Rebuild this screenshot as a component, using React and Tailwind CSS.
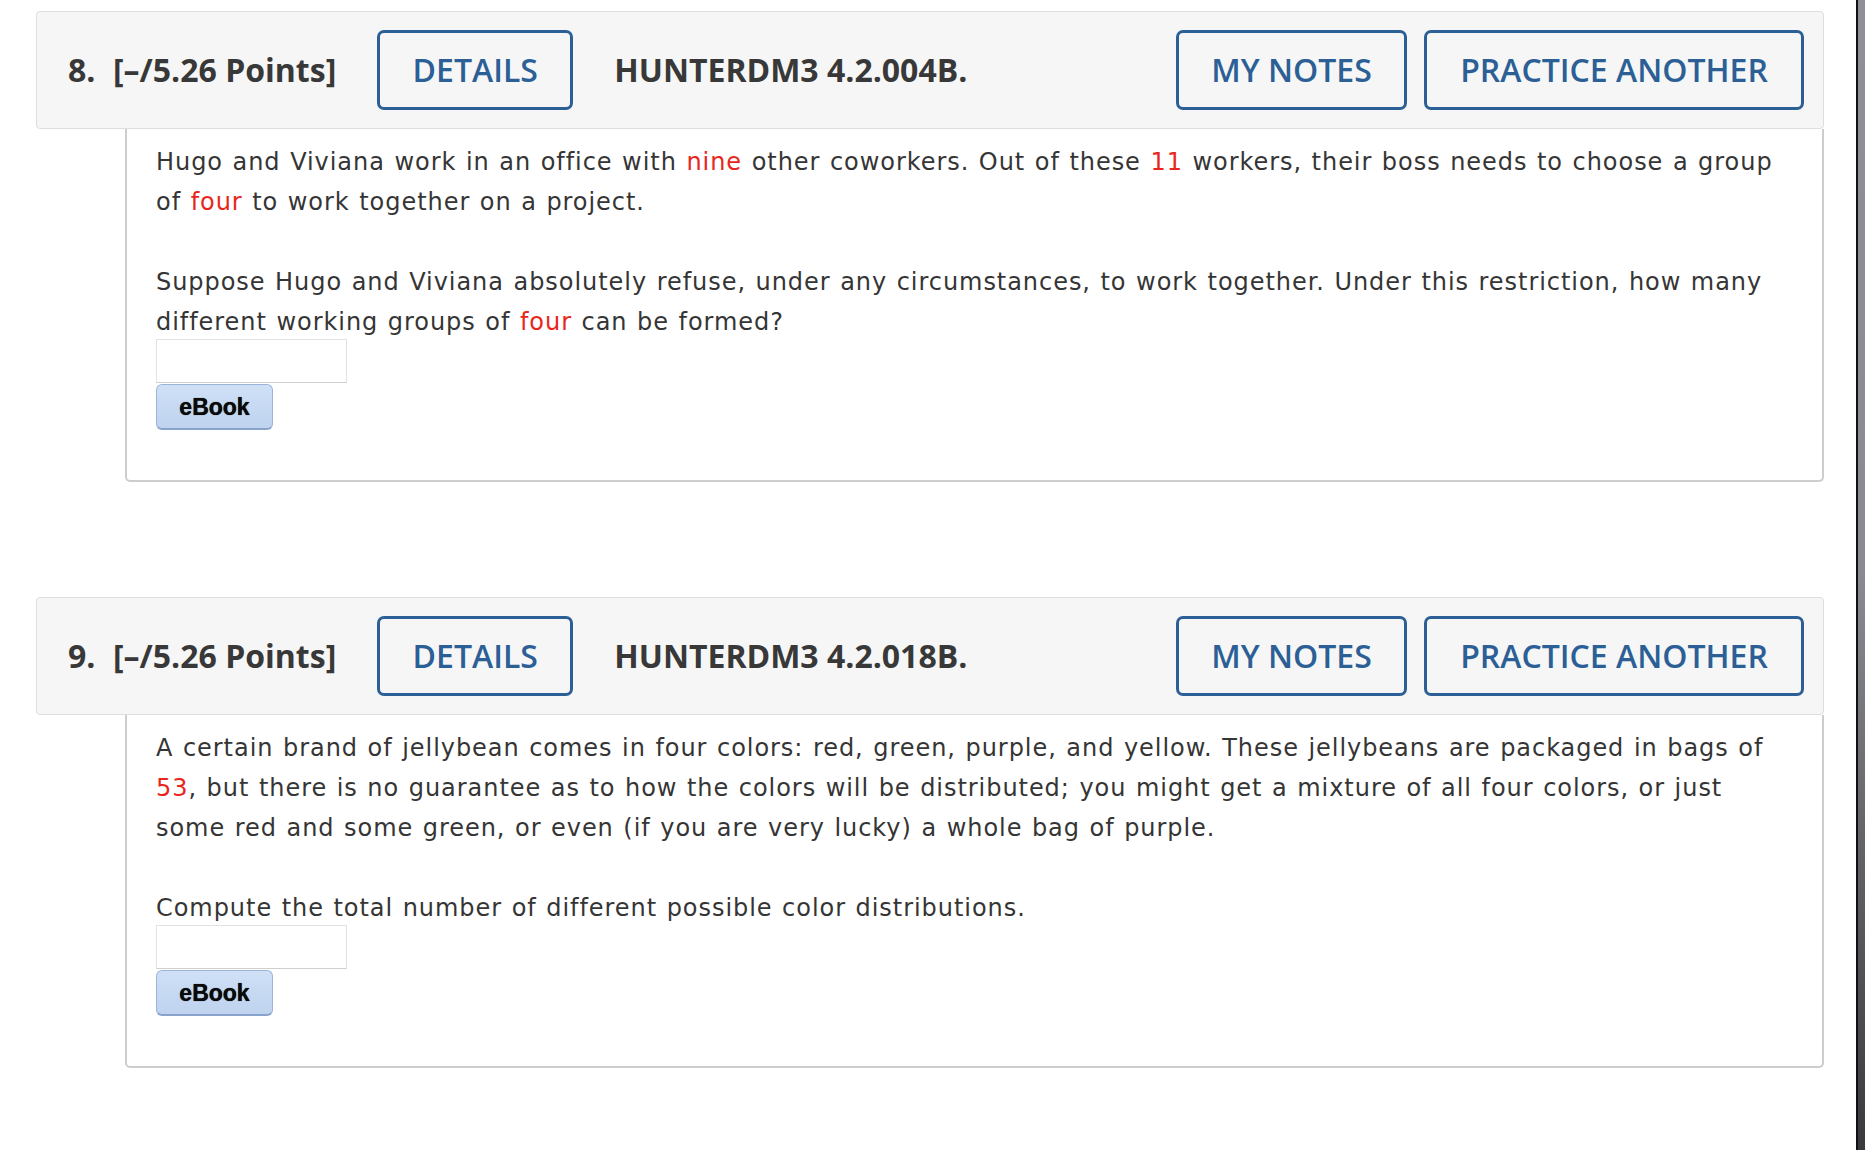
import React from "react";

const R = ({ children }) => <span className="text-[#e8261c]">{children}</span>;

function OutlineBtn({ w, children }) {
  return (
    <div
      className={`h-[80px] ${w} flex items-center justify-center rounded-[7px] border-[3px] border-[#2b5f95] text-[#2b5f95] text-[32px] font-semibold`}
    >
      {children}
    </div>
  );
}

function Header({ num, code }) {
  return (
    <div className="h-[118px] bg-[#f6f6f6] border border-[#dedede] rounded-[4px] flex items-center pl-[31px] pr-[19px] text-[#383838]">
      <span className="text-[32px] font-bold w-[45px]">{num}.</span>
      <span className="text-[32px] font-bold">[–/5.26 Points]</span>
      <div className="ml-[41px]">
        <OutlineBtn w="w-[196px]">DETAILS</OutlineBtn>
      </div>
      <span className="ml-[41px] text-[32px] font-bold">{code}</span>
      <div className="ml-auto flex gap-[17px]">
        <OutlineBtn w="w-[231px]">MY NOTES</OutlineBtn>
        <OutlineBtn w="w-[380px]">PRACTICE ANOTHER</OutlineBtn>
      </div>
    </div>
  );
}

function Answer() {
  return (
    <div className="flex flex-col items-start">
      <div className="-mt-[3px] w-[191px] h-[44px] bg-white border border-[#e2e2e2] border-b-[#cfcfcf]" />
      <div className="w-[117px] h-[46px] mt-[1px] rounded-[6px] border border-[#9cb4da] border-b-[2px] border-b-[#8aa3cc] bg-gradient-to-b from-[#cfe0f6] to-[#bfd3ef] flex items-center justify-center text-[23px] font-bold text-[#0a0a0a] tracking-normal [word-spacing:0px] font-['Liberation_Sans',Arial,sans-serif] [text-shadow:0_0_0.8px_#000]">
        eBook
      </div>
    </div>
  );
}

function Body({ children }) {
  return (
    <div className="ml-[89px] border-x-2 border-b-2 border-[#cdcdcd] rounded-b-[5px] pl-[29px] pr-[30px] pt-[13px] pb-[50px] text-[24px] leading-[40px] tracking-[0.95px] [word-spacing:1px] text-[#353535] font-['DejaVu_Sans',Verdana,sans-serif]">
      {children}
      <Answer />
    </div>
  );
}

export default function App() {
  return (
    <div className="relative w-[1865px] h-[1150px] bg-white overflow-hidden font-['Open_Sans','Noto_Sans',sans-serif]">
      <div className="pt-[11px] pl-[36px] w-[1824px]">
        <Header num="8" code="HUNTERDM3 4.2.004B." />
        <Body>
          <p className="mb-[40px]">
            Hugo and Viviana work in an office with <R>nine</R> other coworkers. Out of these <R>11</R> workers, their boss needs to choose a group of <R>four</R> to work together on a project.
          </p>
          <p>
            Suppose Hugo and Viviana absolutely refuse, under any circumstances, to work together. Under this restriction, how many different working groups of <R>four</R> can be formed?
          </p>
        </Body>

        <div className="mt-[115px]">
          <Header num="9" code="HUNTERDM3 4.2.018B." />
          <Body>
            <p className="mb-[40px]">
              A certain brand of jellybean comes in four colors: red, green, purple, and yellow. These jellybeans are packaged in bags of <R>53</R>, but there is no guarantee as to how the colors will be distributed; you might get a mixture of all four colors, or just some red and some green, or even (if you are very lucky) a whole bag of purple.
            </p>
            <p>Compute the total number of different possible color distributions.</p>
          </Body>
        </div>
      </div>

      <div className="absolute top-0 right-0 h-full w-[9px] flex">
        <div className="w-[2px] h-full bg-[#111]" />
        <div className="flex-1 h-full bg-gradient-to-b from-[#8f8f97] via-[#8a8a92] to-[#3a3a3e]" />
      </div>
    </div>
  );
}
